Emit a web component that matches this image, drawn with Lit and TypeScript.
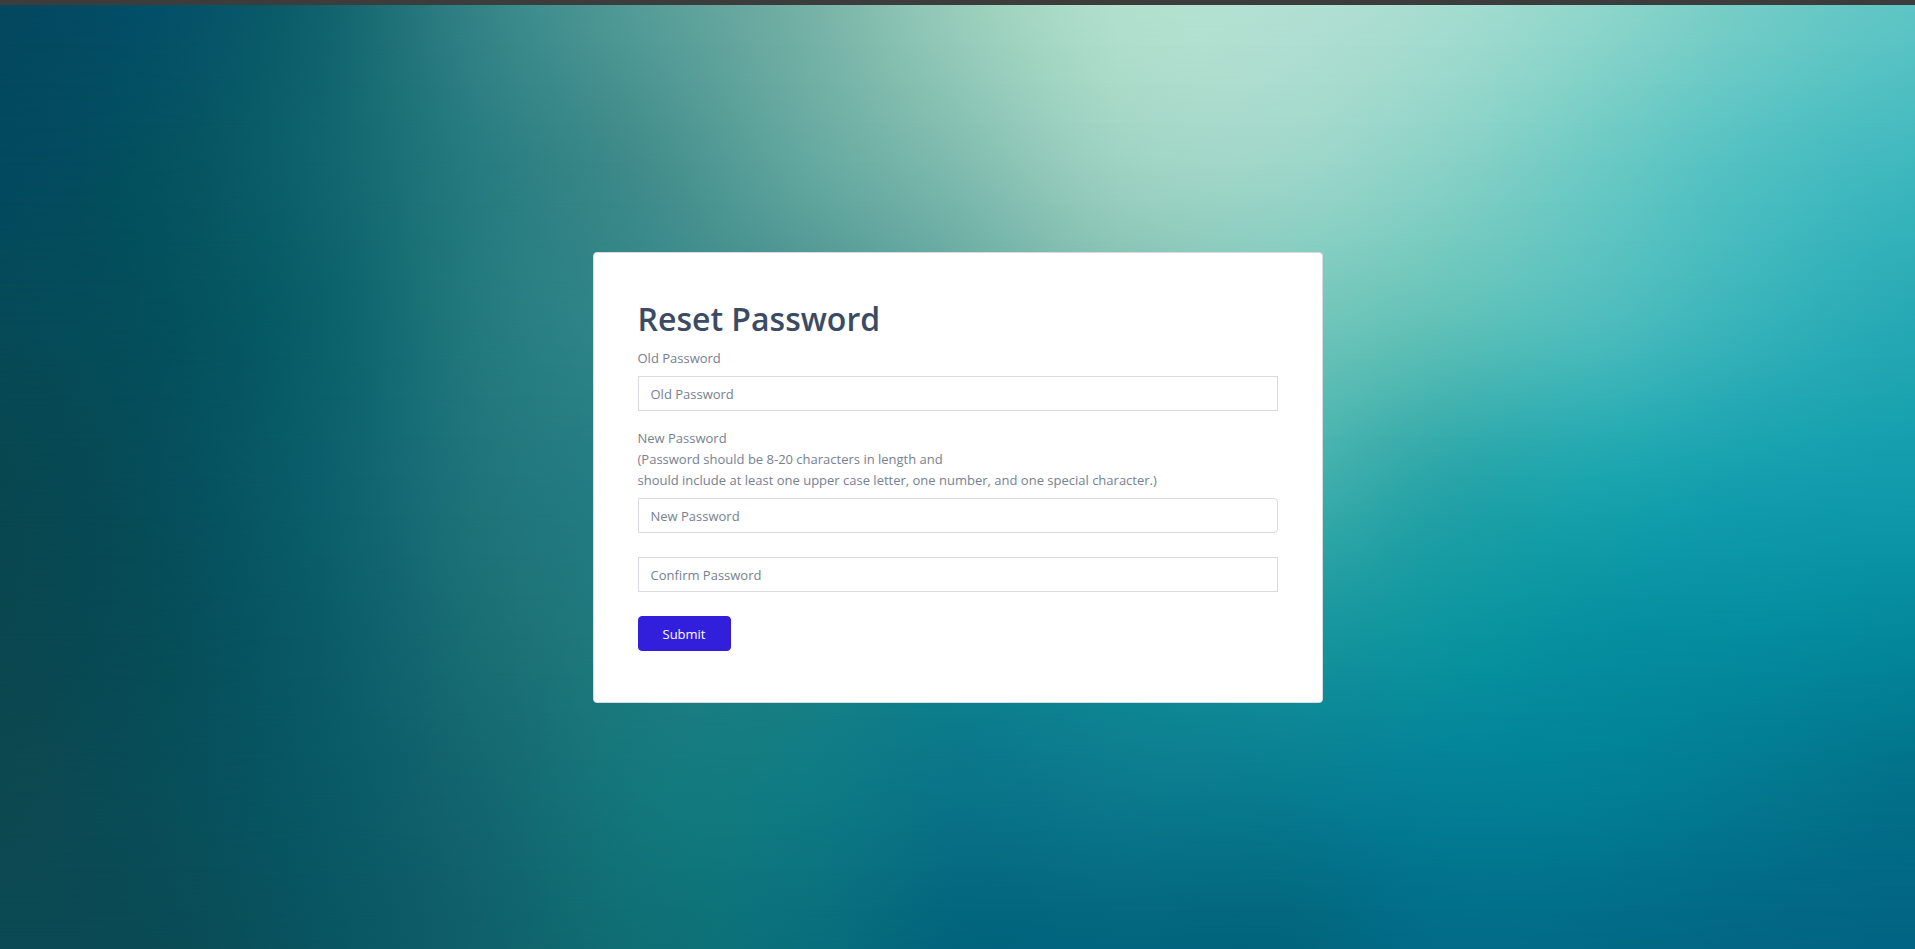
import { LitElement, html, css } from "lit";
import { customElement } from "lit/decorators.js";
import { styleMap } from "lit/directives/style-map.js";

type Colour = number[];

// Colour mesh of the backdrop: evenly spaced rows (top to bottom), each with
// evenly spaced colours (left to right).
const MESH: Colour[][] = [
  "04485f 045068 10626c 348487 549c98 74b0a5 98cdbb b1e0ce b2e0d2 a6ddd0 8fd6cb 72ccc6 5ec5c5",
  "03495f 045260 10646e 277c80 418c8b 62a79f 80bcaf 9ed2c2 9fd7ca 8bd2c7 6ccac4 50c0c2 3fb8be",
  "064a58 04505c 0a6069 237a7e 33878a 46908f 5da59f 78baae 75c5ba 62c2b8 50bdbd 37b3ba 26a9b4",
  "084750 064e5b 0b5f6c 1f747b 258086 2c8a8e 3c9c9c 45aaa6 46b2ad 2ba5a8 1ca5ae 159fae 129cac",
  "0a4750 064d58 0a5b68 1a6e74 1f7c80 1b8186 128690 148e98 1a949c 0d959f 078f9f 058ca0 04889b",
  "0d4850 084e59 085965 13666f 14787c 107b83 0a7488 0c7a8c 087c90 047f96 027f95 03788f 027088",
  "0b4a54 0a4b55 095561 0f606a 0f6f74 0a6f7c 02647c 02657f 02647c 026c88 026a86 026684 026484",
].map((row) =>
  row.split(" ").map((c) => [0, 2, 4].map((i) => parseInt(c.slice(i, i + 2), 16))),
);

// Catmull-Rom blend between b and c.
const spline = (a: Colour, b: Colour, c: Colour, d: Colour, t: number): Colour =>
  b.map((_, i) =>
    b[i] + 0.5 * t * (c[i] - a[i] +
      t * (2 * a[i] - 5 * b[i] + 4 * c[i] - d[i] +
        t * (3 * (b[i] - c[i]) + d[i] - a[i]))),
  );

// Puts `factor` smoothly blended colours in place of each step of a list.
const refine = (list: Colour[], factor: number): Colour[] => {
  const last = list.length - 1;
  const at = (i: number) => list[Math.min(last, Math.max(0, i))];
  return Array.from({ length: last * factor + 1 }, (_, n) => {
    const i = Math.floor(n / factor);
    return spline(at(i - 1), at(i), at(i + 1), at(i + 2), (n % factor) / factor);
  });
};

const transpose = (grid: Colour[][]): Colour[][] =>
  grid[0].map((_, x) => grid.map((row) => row[x]));

const FINE_MESH = transpose(
  transpose(MESH.map((row) => refine(row, 4))).map((column) => refine(column, 4)),
);

@customElement("mesh-backdrop")
export class MeshBackdrop extends LitElement {
  static styles = css`
    :host {
      display: grid;
    }
    .layer {
      grid-area: 1 / 1;
    }
  `;

  render() {
    const step = 100 / (FINE_MESH.length - 1);
    return FINE_MESH.map((row, i) => {
      const colours = row
        .map((c) => `rgb(${c.map((v) => Math.max(0, Math.round(v))).join(" ")})`)
        .join(", ");
      const mask =
        i === 0
          ? "none"
          : `linear-gradient(to bottom, transparent ${(i - 1) * step}%, #000 ${i * step}%)`;
      return html`<div
        class="layer"
        style=${styleMap({
          backgroundImage: `linear-gradient(to right, ${colours})`,
          maskImage: mask,
        })}
      ></div>`;
    });
  }
}

@customElement("app-root")
export class AppRoot extends LitElement {
  static styles = css`
    :host {
      display: grid;
      grid-template-rows: 5px 1fr;
      min-height: 100vh;
      font-family: "Segoe UI", "Open Sans", "Noto Sans", sans-serif;
      font-size: 13px;
      line-height: 21px;
      color: #768192;
    }
    * {
      box-sizing: border-box;
    }
    .strip {
      background: #3c3c3c;
    }
    .backdrop {
      grid-area: 2 / 1;
    }
    .stage {
      grid-area: 2 / 1;
      z-index: 1;
      display: grid;
      place-items: center;
    }
    .card {
      width: 100%;
      max-width: 730px;
      padding: 45px 44px 51px;
      background: #fff;
      border: 1px solid #d8dbe0;
      border-radius: 4px;
    }
    h1 {
      margin: 0 0 8px;
      font-size: 32px;
      line-height: 42px;
      font-weight: 600;
      color: #3c4b64;
    }
    form {
      display: flex;
      flex-direction: column;
    }
    label {
      margin-bottom: 7px;
    }
    input {
      width: 100%;
      height: 35px;
      padding: 7px 12px 5px;
      border: 1px solid #d8dbe0;
      border-radius: 0;
      background: #fff;
      font: inherit;
      color: #768192;
      outline: none;
    }
    input::placeholder {
      color: #768192;
      opacity: 1;
    }
    input:focus {
      border-color: #958bef;
    }
    .old {
      margin-bottom: 17px;
    }
    .new,
    .confirm {
      margin-bottom: 24px;
    }
    .new {
      border-radius: 0 4px 4px 0;
    }
    button {
      align-self: flex-start;
      height: 35px;
      padding: 7px 24px 5px;
      border: 1px solid #321fdb;
      border-radius: 4px;
      background: #321fdb;
      font: inherit;
      color: #fff;
      cursor: pointer;
    }
  `;

  private onSubmit(event: Event) {
    event.preventDefault();
  }

  render() {
    return html`
      <div class="strip"></div>
      <mesh-backdrop class="backdrop"></mesh-backdrop>
      <main class="stage">
        <section class="card">
          <h1>Reset Password</h1>
          <form @submit=${this.onSubmit}>
            <label for="old">Old Password</label>
            <input class="old" id="old" type="password" placeholder="Old Password" />
            <label for="new"
              >New Password<br />(Password should be 8-20 characters in length and<br />should
              include at least one upper case letter, one number, and one special character.)</label
            >
            <input class="new" id="new" type="password" placeholder="New Password" />
            <input
              class="confirm"
              id="confirm"
              type="password"
              placeholder="Confirm Password"
              aria-label="Confirm Password"
            />
            <button type="submit">Submit</button>
          </form>
        </section>
      </main>
    `;
  }
}
